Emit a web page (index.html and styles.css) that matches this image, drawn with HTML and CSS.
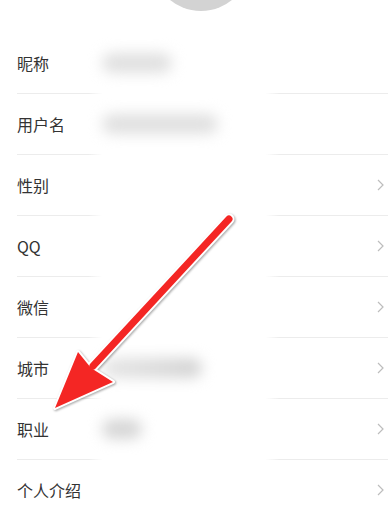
FILE: index.html
```html
<!DOCTYPE html>
<html lang="zh">
<head>
<meta charset="utf-8">
<link rel="stylesheet" href="styles.css">
</head>
<body>
<div class="page">
  <div class="header"><div class="avatar"></div></div>
  <ul class="list">
    <li class="row"><span class="label">昵称</span><span class="value"><span class="blob b1"></span></span></li>
    <li class="row"><span class="label">用户名</span><span class="value"><span class="blob b2"></span></span></li>
    <li class="row"><span class="label">性别</span><span class="value"></span><svg class="chev" viewBox="0 0 7 12"><polyline points="1,1 6,6 1,11"/></svg></li>
    <li class="row"><span class="label">QQ</span><span class="value"></span><svg class="chev" viewBox="0 0 7 12"><polyline points="1,1 6,6 1,11"/></svg></li>
    <li class="row"><span class="label">微信</span><span class="value"></span><svg class="chev" viewBox="0 0 7 12"><polyline points="1,1 6,6 1,11"/></svg></li>
    <li class="row"><span class="label">城市</span><span class="value"><span class="blob b3"></span></span><svg class="chev" viewBox="0 0 7 12"><polyline points="1,1 6,6 1,11"/></svg></li>
    <li class="row"><span class="label">职业</span><span class="value"><span class="blob b4"></span></span><svg class="chev" viewBox="0 0 7 12"><polyline points="1,1 6,6 1,11"/></svg></li>
    <li class="row last"><span class="label">个人介绍</span><span class="value"></span><svg class="chev" viewBox="0 0 7 12"><polyline points="1,1 6,6 1,11"/></svg></li>
  </ul>
  <svg class="arrow" viewBox="0 0 388 512" width="388" height="512">
    <g class="outline">
      <line x1="229" y1="219" x2="93" y2="366"/>
      <polygon points="55,408 78,352 91,368 113,382"/>
    </g>
    <g class="fill">
      <line x1="229" y1="219" x2="93" y2="366"/>
      <polygon points="55,408 78,352 91,368 113,382"/>
    </g>
  </svg>
</div>
</body>
</html>
```
FILE: styles.css
```css
html, body {
  margin: 0;
  padding: 0;
  background: #ffffff;
}
.page {
  position: relative;
  width: 388px;
  height: 512px;
  overflow: hidden;
  font-family: "Noto Sans CJK SC", "Noto Sans", sans-serif;
}
.header {
  height: 33px;
  overflow: hidden;
  display: flex;
  justify-content: center;
  padding-left: 14px;
}
.avatar {
  flex: none;
  width: 98px;
  height: 98px;
  border-radius: 50%;
  background: #d3d3d3;
  margin-top: -87px;
}
.list {
  list-style: none;
  margin: 0;
  padding: 0 0 0 17px;
}
.row {
  height: 60px;
  display: flex;
  align-items: center;
  border-bottom: 1px solid transparent;
  border-image: linear-gradient(to right, #ececec 0, #ececec 72px, rgba(236,236,236,0) 86px, rgba(236,236,236,0) 248px, #ececec 262px, #ececec 100%) 1;
}
.row.last {
  border-bottom: none;
}
.label {
  width: 83px;
  flex: none;
  font-size: 16px;
  color: #333333;
  line-height: 20px;
}
.value {
  flex: 1;
  height: 30px;
  position: relative;
}
.blob {
  position: absolute;
  top: 5px;
  left: 2px;
  height: 20px;
  border-radius: 10px;
  background: #dadada;
  filter: blur(7px);
}
.b1 { width: 70px; background: #e0e0e0; }
.b2 { width: 116px; background: #e0e0e0; }
.b3 { width: 100px; background: linear-gradient(to right, #e6e6e6, #d2d2d2); }
.b4 { width: 40px; background: #d6d6d6; }
.chev {
  flex: none;
  width: 7px;
  height: 12px;
  margin-right: 4px;
  fill: none;
  stroke: #bdbdbd;
  stroke-width: 1.2;
}
.arrow {
  position: absolute;
  left: 0;
  top: 0;
  pointer-events: none;
  filter: drop-shadow(1px 1px 1.2px rgba(0,0,0,0.35));
}
.outline line {
  stroke: #ffffff;
  stroke-width: 11;
  stroke-linecap: round;
}
.outline polygon {
  fill: #ffffff;
  stroke: #ffffff;
  stroke-width: 4;
  stroke-linejoin: round;
}
.fill line {
  stroke: #f42624;
  stroke-width: 7;
  stroke-linecap: round;
}
.fill polygon {
  fill: #f42624;
}
```
